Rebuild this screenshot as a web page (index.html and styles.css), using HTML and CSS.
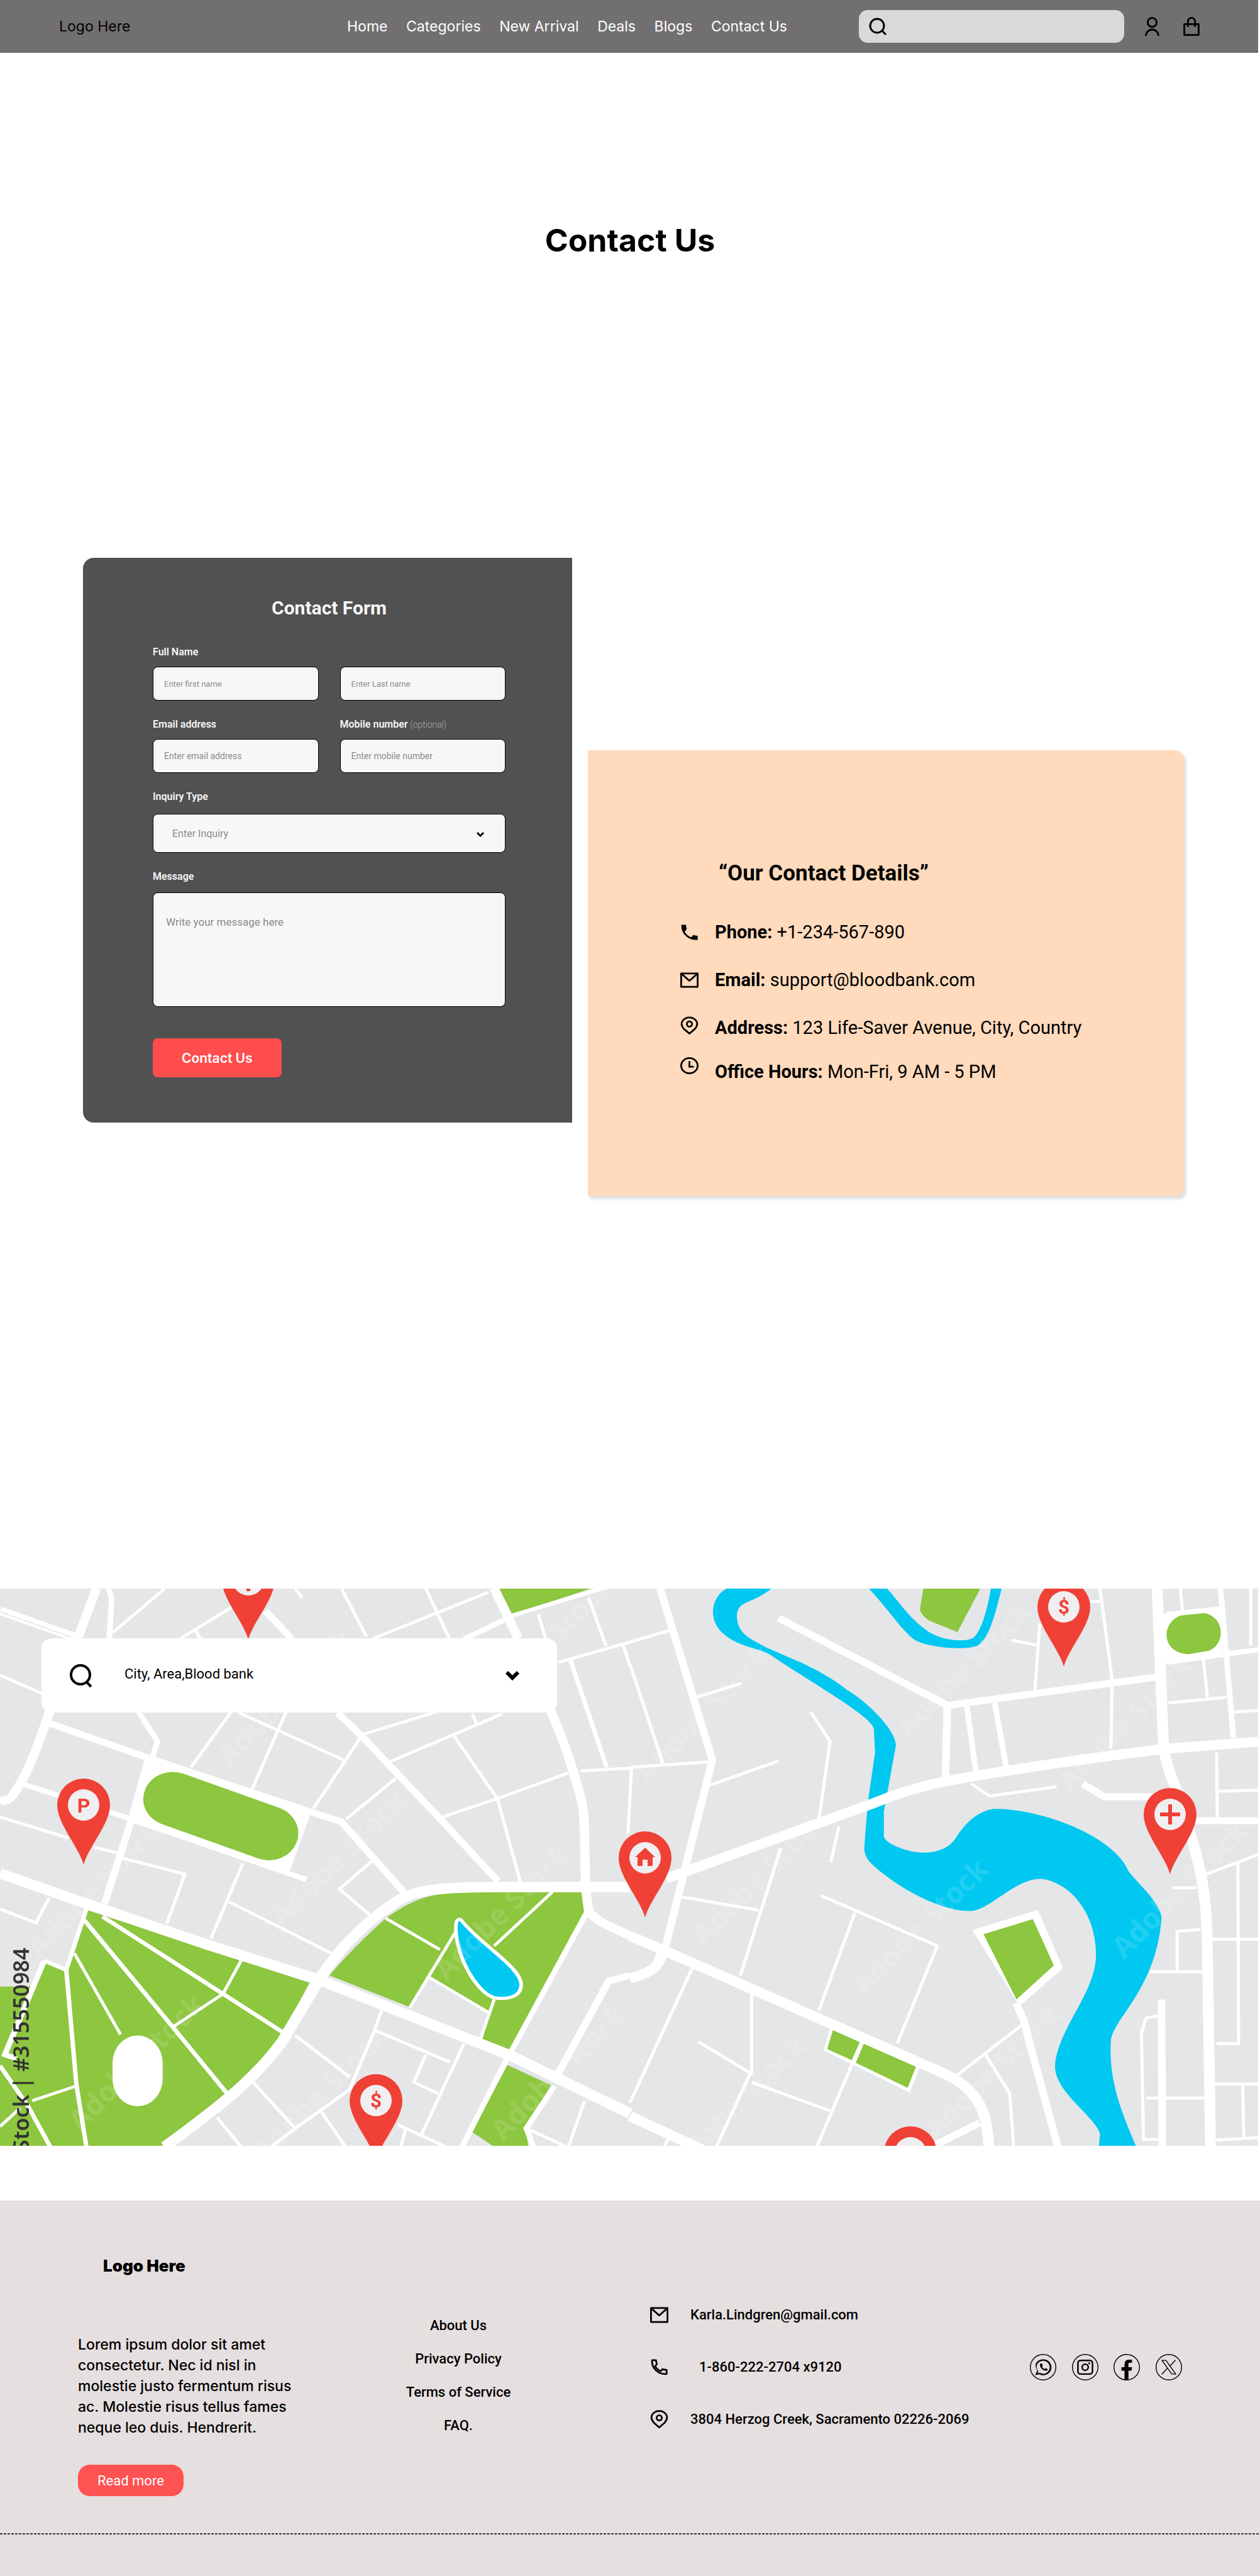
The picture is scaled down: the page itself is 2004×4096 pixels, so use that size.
FILE: index.html
```html
<!DOCTYPE html>
<html lang="en">
<head>
<meta charset="utf-8">
<meta name="viewport" content="width=device-width, initial-scale=1">
<title>Contact Us</title>
<link rel="stylesheet" href="styles.css">
</head>
<body>
<header class="site-header">
  <a class="logo" href="#">Logo Here</a>
  <nav class="nav" aria-label="Main">
    <a href="#">Home</a>
    <a href="#">Categories</a>
    <a href="#">New Arrival</a>
    <a href="#">Deals</a>
    <a href="#">Blogs</a>
    <a href="#">Contact Us</a>
  </nav>
  <label class="search">
    <svg width="28" height="28" viewBox="0 0 28 28" fill="none" stroke="#000" stroke-width="3"><circle cx="13" cy="13" r="11"/><path d="M20 20l7 7"/></svg>
    <input type="search" aria-label="Search">
  </label>
  <div class="header-actions">
    <a href="#" aria-label="Account"><svg width="23" height="30" viewBox="0 0 32 42" fill="none" stroke="#000" stroke-width="4"><circle cx="16" cy="12" r="10"/><path d="M2 42a14 14 0 0 1 28 0"/></svg></a>
    <a href="#" aria-label="Bag"><svg width="26" height="30" viewBox="0 0 36 42" fill="none" stroke="#000" stroke-width="4" stroke-linejoin="round"><path d="M2 16h32v24H2z"/><path d="M10 22V10a8 8 0 0 1 16 0v12"/></svg></a>
  </div>
</header>

<main>
  <h1 class="page-title">Contact Us</h1>

  <section class="contact">
    <form class="form-card">
      <h2>Contact Form</h2>
      <div class="fields">
        <div class="field">
          <label for="first">Full Name</label>
          <input id="first" type="text" placeholder="Enter first name">
        </div>
        <div class="field field-bottom">
          <input id="last" type="text" placeholder="Enter Last name" aria-label="Last name">
        </div>
        <div class="field reach-field">
          <label for="email">Email address</label>
          <input id="email" type="email" placeholder="Enter email address">
        </div>
        <div class="field reach-field">
          <label for="mobile">Mobile number <span>(optional)</span></label>
          <input id="mobile" type="tel" placeholder="Enter mobile number">
        </div>
        <div class="field wide inquiry">
          <label for="inquiry">Inquiry Type</label>
          <div class="select">
            <select id="inquiry"><option>Enter Inquiry</option></select>
            <svg width="12" height="9" viewBox="0 0 12 9" fill="none" stroke="#000" stroke-width="3"><path d="M1 2l5 5 5-5"/></svg>
          </div>
        </div>
        <div class="field wide message">
          <label for="message">Message</label>
          <textarea id="message" placeholder="Write your message here"></textarea>
        </div>
      </div>
      <button class="submit" type="submit">Contact Us</button>
    </form>

    <aside class="details-card">
      <h2>“Our Contact Details”</h2>
      <ul>
        <li><svg width="29" height="25" viewBox="0 0 42 35"><path d="M2.500 0h10.500c.5 4 1 7 2 10l-5 6.500c4 6 9 10 15 12.500l4.500-5.500c3.500 1 7 1.500 10.500 2V35C16 36 1 18 2.500 0z"/></svg><span><b>Phone:</b> +1-234-567-890</span></li>
        <li><svg width="29" height="25" viewBox="0 0 42 35" fill="none" stroke="#000" stroke-width="4" stroke-linejoin="round"><path d="M2 2h38v31H2z"/><path d="M3 3l18 16L39 3"/></svg><span><b>Email:</b> support@bloodbank.com</span></li>
        <li class="top-icon"><svg width="29" height="30" viewBox="0 0 42 42" fill="none" stroke="#000" stroke-width="4"><path d="M21 39L8.500 28.500C-5 13 10 2 21 2s26 11 12.500 26.500z"/><circle cx="21" cy="17" r="6"/></svg><span><b>Address:</b> 123 Life-Saver Avenue, City, Country</span></li>
        <li class="hours"><svg width="29" height="27" viewBox="0 0 42 39" fill="none" stroke="#000" stroke-width="4"><ellipse cx="21" cy="19.500" rx="19" ry="17.500"/><path d="M21 9v13h10"/></svg><span><b>Office Hours:</b> Mon-Fri, 9 AM - 5 PM</span></li>
      </ul>
    </aside>
  </section>

  <section class="map">
    <svg class="map-art" viewBox="0 0 2001 886" role="img" aria-label="City map">
      <defs>
        <g id="pin"><path d="M0 95C-8 66-42 30-42 0a42 42 0 0 1 84 0C42 30 8 66 0 95z" fill="#ef4136"/><circle r="25" fill="#f1eef1"/></g>
      </defs>
      <rect width="2001" height="886" fill="#e5e6e8"/>
      <g transform="scale(.639 .5858) translate(0 -35)">
        <g fill="#8dc63f">
          <path d="M1243 35h227l-195 70z"/>
          <path d="M218 908L770 1105 690 1270 565 1405 400 1550H0V1115h90l20-65 55 20z"/>
          <path d="M820 1085C880 1010 910 980 960 930 1040 870 1080 858 1200 858H1450l8 47-190 388-68-31 20-77-152-95-46 82z"/>
          <path d="M1263 1328l109 55-64 117 7 50h-85l-55-40z"/>
        </g>
        <g fill="#fff">
          <path d="M370 500L775 640 720 805 325 670z"/>
          <rect x="280" y="1248" width="125" height="192" rx="62" ry="75"/>
        </g>
        <path d="M430 606L669 699" stroke="#8dc63f" stroke-width="147" stroke-linecap="round"/>
        <g fill="none" stroke="#fff" stroke-width="8">
          <path d="M0 270L105 320M575 370L475 520M712 370L628 578M595 372L855 500M900 435L780 632M905 430L1100 365M970 505L1250 375M1130 435L1238 605 1295 830M1415 535L1238 605 1100 655M985 550L862 660M1445 530L1568 522M1340 105L1358 170M1390 235L1568 180M1465 60L1508 190M1060 35L1118 170M930 170L1215 45M850 35L912 165M280 155L410 35M450 170L600 70M488 150L500 175M735 35L752 60M1175 375L1188 405M1550 185L1568 245"/>
          <path d="M0 655L170 712M235 737L290 752M300 765L460 810 415 945M605 780L525 985M570 885L825 1025M925 775L845 850 925 925M0 905L90 942 122 875"/>
          <path d="M735 1248L870 1360M950 1180L930 1240 870 1395 735 1500 675 1550M935 1235L1120 1320M1155 1270L1050 1515M1060 1300L1030 1375 1090 1405M540 1470L600 1550M630 1375L735 1500M800 1455L860 1550M990 1490L1110 1550M1010 1500L998 1550M1310 1500L1410 1550M1455 1425L1415 1550"/>
          <path d="M185 1025L300 1245M600 1045L555 1135 430 1225M80 1425L190 1385M0 1495L50 1445M960 930L1095 1015M1135 965L1020 1172M1375 858L1230 1005M1068 1090L1215 1185M1230 1150L1195 1260"/>
          <path stroke-width="11" d="M165 1070L190 1380 215 1550M210 935L430 1225 565 1405M255 925L555 1135 705 1240M0 1330L70 1440 125 1550M1510 520L1420 230M1275 108L1568 12M110 1045L165 1070 215 905"/>
          <path stroke-width="14" d="M110 1045L12 1300 40 1310M270 35L278 60 272 170M345 370L392 450 380 490M55 565L325 660 763 825M1155 172L1275 110M1262 1310L1150 1550M1380 1385L1310 1500 1328 1550M1465 905L1268 1300"/>
          <path stroke-width="18" d="M122 400L370 495 770 640 850 668 1010 865M370 495L325 670 260 890M840 372L900 435 1100 665 1240 830M660 95L725 170M1568 1085L1515 1100 1380 1370"/>
          <path stroke-width="23" d="M240 35L195 165M0 95L200 172M125 365C100 440 80 510 50 565S20 605 0 612M1230 35L1290 170M1370 365C1400 440 1425 520 1440 580S1455 640 1457 845L1465 910C1490 945 1520 950 1568 978"/>
          <path stroke-width="28" d="M0 808L215 890 520 1003 790 1095 1270 1302 1568 1460M1568 845H1250C1060 845 1020 855 960 905 890 960 840 1020 795 1095L705 1260C640 1360 560 1430 410 1550"/>
        </g>
        <path d="M0 98L175 166" stroke="#e5e6e8" stroke-width="3"/>
        <path d="M1148 935C1200 1005 1300 1065 1297 1112 1295 1150 1250 1150 1228 1145 1180 1125 1130 1020 1135 945 1137 930 1145 932 1148 935z" fill="#00c8f0" stroke="#fff" stroke-width="9"/>

        <g transform="translate(1568 0)">
          <path fill="#00c8f0" d="M240 35C200 60 195 120 230 155 270 195 320 195 350 215 450 290 600 380 607 415L610 480 592 615 583 740C585 770 600 780 620 800 700 870 790 912 850 910 900 905 960 820 1025 823 1100 835 1160 920 1160 1030 1160 1130 1065 1230 1058 1330 1055 1400 1160 1470 1170 1515L1167 1550H1260C1230 1470 1190 1380 1197 1260 1205 1200 1310 1120 1323 930 1325 890 1250 820 1240 800 1200 700 1010 630 905 633 860 640 830 680 812 710 790 750 740 757 700 748 650 735 630 715 632 705V640L662 460C660 420 600 350 540 310 470 250 400 225 340 195 300 170 268 160 266 110 268 65 300 80 352 35z"/>
          <path fill="#00c8f0" d="M595 35C650 100 690 170 720 180 770 200 850 200 865 190 895 170 910 100 925 35H898C890 90 875 150 855 168 840 180 780 180 740 150 690 110 670 70 640 35z"/>
          <path fill="#8dc63f" d="M730 35H872L815 153 745 122Q722 105 722 90z"/>
          <path fill="#fff" d="M852 962L1015 907 1078 1065 970 1168zM482 1288L500 1220 725 1325 696 1403zM1318 105L1475 90V215L1330 238z"/>
          <path fill="#8dc63f" d="M880 973L1003 932 1055 1058 962 1150zM505 1233L572 1266 552 1315 491 1285zM582 1270L712 1333 691 1390 562 1322zM1390 103L1430 101C1485 115 1480 190 1440 204L1390 213C1315 210 1320 110 1390 103z"/>
          <g fill="none" stroke="#fff" stroke-width="8">
            <path d="M0 180L100 148M0 240L82 510M0 520L200 505M4 520L-5 700M165 330L278 292M195 570L370 503M450 370L498 450 470 665M520 680L500 778M375 740L275 1085M120 870L320 908M475 868L765 1005 665 1270M560 915L470 1180M155 1065L0 1430M303 1135V1355M170 1265L300 1350 215 1550M303 1375L497 1452M555 1320L465 1550M85 1550L95 1530M950 175L1020 190M1020 130L1008 310M1170 35L1200 280 1197 470M1145 70H1172M1370 35L1375 95M1545 35V190M1427 225L1437 330M1340 345L1485 330M1505 370L1568 365M850 565L895 598 1062 573M1460 480L1462 660M1465 585L1568 582M1435 810L1568 755M1513 780L1515 1270H1460M1350 847H1410M1420 960L1362 965V1075M1295 1075H1430M1450 987H1568M1313 1195L1285 1200 1273 1240 1278 1530H1315M1285 1418H1430M1455 1380H1568M1525 1385L1528 1530M1460 1532L1568 1525M975 1220L815 1355M885 1300L945 1405 955 1550"/>
            <path stroke-width="14" d="M1335 235L1568 200M1335 105L1470 90M1470 35L1502 440M838 350L862 540M908 345L938 530"/>
            <path stroke-width="19" d="M75 35L205 500 90 1000M370 115L790 352 1310 275M790 352L785 555M1127 565L1180 600H1300M1400 665H1568M1323 1150L1325 1550M960 1160Q985 1210 990 1250L1065 1550M760 1545L870 1485"/>
            <path stroke-width="27" d="M85 1000C75 1050 70 1075 0 1092M0 978L70 1010 780 1350C870 1395 890 1460 893 1550M0 1467L180 1558M90 822L600 620Q700 575 800 555 1000 515 1330 470L1568 450M1312 35L1328 460Q1335 520 1360 580L1400 720C1430 830 1435 900 1437 1000L1445 1550"/>
          </g>
        </g>
      </g>
      <g class="watermark">
        <text transform="translate(62 590) rotate(-45)">Adobe Stock</text>
        <text transform="translate(450 540) rotate(-45)">Adobe Stock</text>
        <text transform="translate(365 285) rotate(-45)">Adobe Stock</text>
        <text transform="translate(710 625) rotate(-45)">Adobe Stock</text>
        <text transform="translate(128 865) rotate(-45)">Adobe Stock</text>
        <text transform="translate(420 915) rotate(-45)">Adobe Stock</text>
        <text transform="translate(800 880) rotate(-45)">Adobe Stock</text>
        <text transform="translate(780 200) rotate(-45)">Adobe Stock</text>
        <text transform="translate(1030 310) rotate(-45)">Adobe Stock</text>
        <text transform="translate(1120 570) rotate(-45)">Adobe Stock</text>
        <text transform="translate(1375 650) rotate(-45)">Adobe Stock</text>
        <text transform="translate(1445 240) rotate(-45)">Adobe Stock</text>
        <text transform="translate(1702 325) rotate(-45)">Adobe Stock</text>
        <text transform="translate(1788 590) rotate(-45)">Adobe Stock</text>
        <text transform="translate(1085 930) rotate(-45)">Adobe Stock</text>
        <text transform="translate(1490 880) rotate(-45)">Adobe Stock</text>
      </g>
      <text class="stock-id" transform="translate(46 571) rotate(-90)">Stock | #315550984</text>
      <g class="pins">
        <use href="#pin" x="395" y="-14"/><path d="M392 0h6v4h-6z" fill="#ef4136"/>
        <use href="#pin" x="133" y="344"/><text x="133" y="356">P</text>
        <use href="#pin" x="598" y="814"/><text x="598" y="825">$</text>
        <use href="#pin" x="1026" y="428"/><path fill="#ef4136" d="M1026 412l16 15h-4v14h-8v-10h-8v10h-8v-14h-4z"/>
        <use href="#pin" x="1692" y="29"/><text x="1692" y="40">$</text>
        <use href="#pin" x="1861" y="359"/><path d="M1861 343v32M1845 359h32" stroke="#ef4136" stroke-width="6"/>
        <use href="#pin" x="1448" y="897"/>
      </g>
    </svg>
    <div class="map-search">
      <svg width="36" height="38" viewBox="0 0 36 38" fill="none" stroke="#000" stroke-width="4"><circle cx="17" cy="18" r="15"/><path d="M26 29l8 8"/></svg>
      <input type="text" placeholder="City, Area,Blood bank" aria-label="City, area or blood bank">
      <button type="button" aria-label="Show options"><svg width="22" height="17" viewBox="0 0 22 17" fill="none" stroke="#000" stroke-width="6"><path d="M2 3l9 9 9-9"/></svg></button>
    </div>
  </section>
</main>

<footer class="site-footer">
  <div class="footer-grid">
    <div class="about">
      <a class="footer-logo" href="#">Logo Here</a>
      <p>Lorem ipsum dolor sit amet<br>consectetur. Nec id nisl in<br>molestie justo fermentum risus<br>ac. Molestie risus tellus fames<br>neque leo duis. Hendrerit.</p>
      <button type="button">Read more</button>
    </div>
    <nav class="links" aria-label="Footer">
      <a href="#">About Us</a>
      <a href="#">Privacy Policy</a>
      <a href="#">Terms of Service</a>
      <a href="#">FAQ.</a>
    </nav>
    <ul class="reach">
      <li><svg width="29" height="26" viewBox="0 0 42 36" fill="none" stroke="#000" stroke-width="4" stroke-linejoin="round"><path d="M2 2h38v32H2z"/><path d="M3 3l18 16L39 3"/></svg><a href="#">Karla.Lindgren@gmail.com</a></li>
      <li class="phone"><svg width="29" height="26" viewBox="0 0 42 36" fill="none" stroke="#000" stroke-width="4" stroke-linejoin="round"><path d="M4.500 2h9c.5 4 1 6 2 9l-4 5c3 5 8 9 13 11l4-4.500c3 1 6 1.500 9.500 2v9C18 35 3 20 4.500 2z"/></svg><a href="#">1-860-222-2704 x9120</a></li>
      <li><svg width="29" height="30" viewBox="0 0 42 43" fill="none" stroke="#000" stroke-width="4"><path d="M21 40L8.500 29C-5 13 10 2 21 2s26 11 12.500 27z"/><circle cx="21" cy="18" r="6"/></svg><span>3804 Herzog Creek, Sacramento 02226-2069</span></li>
    </ul>
    <div class="social">
      <a href="#" aria-label="WhatsApp"><svg viewBox="0 0 60 60"><circle cx="30" cy="30" r="29"/><path class="ink" fill-rule="evenodd" d="M12 48l5-11C7 22 18 12 31 12c11 0 18 9 18 18 0 15-16 22-27 16zM17.500 44l5-1.500C34 49 45 41 45 30c0-8-7-14.500-14-14.500-14 0-20 13-12 23z"/><path class="ink" d="M23 23c3-3 5-2 6 2l-1 4c1 3 3 5 6 5l3-2c4 2 4 5 1 6-9 1-16-8-15-15z"/></svg></a>
      <a href="#" aria-label="Instagram"><svg viewBox="0 0 60 60"><circle cx="30" cy="30" r="29"/><rect x="13.500" y="14.500" width="33" height="31" rx="6" stroke-width="3.500"/><circle cx="30" cy="30" r="7" stroke-width="3.500"/><circle class="ink" cx="39" cy="21" r="2.200"/></svg></a>
      <a href="#" aria-label="Facebook"><svg viewBox="0 0 60 60"><circle cx="30" cy="30" r="29"/><path class="ink" d="M25 59.500V38h-7v-8h7v-5c0-9 4-12 10-12h7v7h-5c-3 0-3 2-3 4v6h8l-1 8h-7v21.500z"/></svg></a>
      <a href="#" aria-label="X"><svg viewBox="0 0 60 60"><circle cx="30" cy="30" r="29"/><path d="M14.500 14.500h9l22 31h-9zM45 14L32 28M14 46l13.500-14.500"/></svg></a>
    </div>
  </div>
</footer>
</body>
</html>
```
FILE: styles.css
```css
* { box-sizing: border-box; }

body {
  margin: 0;
  background: #fff;
  color: #000;
  font-family: Roboto, "Liberation Sans", sans-serif;
}

a { color: inherit; text-decoration: none; }
h1, h2, p, ul { margin: 0; padding: 0; }
ul { list-style: none; }
svg { display: block; flex: none; }
button, input, select, textarea { font: inherit; }
button { cursor: pointer; border: 0; }

/* Header */
.site-header {
  display: grid;
  grid-template-columns: 458fr 700fr 114fr 422fr 120fr;
  align-items: center;
  height: 84px;
  margin-right: 3px;
  padding: 0 93px 0 94px;
  background: #726f70;
  font-family: Inter, sans-serif;
  font-size: 23px;
}
.nav {
  display: flex;
  justify-content: space-between;
  color: #fff;
  white-space: nowrap;
}
.search {
  grid-column: 4;
  display: flex;
  align-items: center;
  gap: 12px;
  min-width: 0;
  height: 52px;
  padding: 0 16px;
  border-radius: 14px;
  background: #d9d9d9;
}
.search input {
  flex: 1;
  width: 0;
  min-width: 0;
  border: 0;
  background: none;
}
.header-actions {
  display: flex;
  justify-content: flex-end;
  gap: 38px;
}

/* Title */
.page-title {
  padding: 268px 0 475px;
  font-family: Inter, sans-serif;
  font-size: 50px;
  line-height: 60px;
  font-weight: 700;
  text-align: center;
}

/* Contact section */
.contact {
  display: grid;
  grid-template-columns: 778fr 948fr;
  column-gap: 25px;
  align-items: start;
  padding: 0 121px 0 132px;
}
.form-card {
  padding: 62px 106px 72px 111px;
  border-radius: 17px 0 0 17px;
  background: #515151;
  color: #f7f7f7;
}
.form-card h2 {
  margin-bottom: 43px;
  font-size: 30px;
  line-height: 36px;
  font-weight: 700;
  text-align: center;
}
.fields {
  display: grid;
  grid-template-columns: 1fr 1fr;
  gap: 29px 34px;
}
.field {
  display: flex;
  flex-direction: column;
  gap: 14px;
}
.field-bottom { justify-content: flex-end; }
.wide { grid-column: 1 / -1; }
.inquiry { gap: 18px; }
.message { gap: 16px; }
.field label {
  font-size: 16px;
  line-height: 18px;
  font-weight: 600;
}
.field label span {
  font-size: 14px;
  font-weight: 200;
  color: #ccc;
}
.field input, .field textarea, .field select {
  width: 100%;
  height: 54px;
  padding: 0 17px;
  border: 1px solid #000;
  border-radius: 8px;
  background: #f7f7f7;
  font-size: 13px;
}
.field ::placeholder { color: #8b8b8b; opacity: 1; }
.reach-field input { font-size: 14px; }
.select { position: relative; }
.field select {
  display: block;
  height: 62px;
  padding: 0 30px;
  appearance: none;
  font-size: 16px;
  color: #8b8b8b;
}
.select svg {
  position: absolute;
  right: 34px;
  top: 28px;
  pointer-events: none;
}
.field textarea {
  display: block;
  height: 182px;
  padding: 36px 20px;
  font-size: 17px;
  resize: none;
}
.submit {
  height: 62px;
  margin-top: 50px;
  padding: 0 46px;
  border-radius: 8px;
  background: #ff4d4d;
  color: #fff;
  font-family: Inter, sans-serif;
  font-size: 21px;
  font-weight: 600;
}

.details-card {
  margin-top: 306px;
  padding: 176px 147px 180px;
  border-radius: 0 14px 14px 0;
  background: #ffdabc;
  box-shadow: 4px 5px 4px rgba(0, 0, 0, .12);
}
.details-card h2 {
  margin: 0 0 55px 61px;
  font-size: 35px;
  line-height: 40px;
  font-weight: 700;
}
.details-card li {
  display: flex;
  align-items: center;
  gap: 26px;
  margin-bottom: 40px;
  font-size: 29px;
  line-height: 36px;
}
.details-card b { font-weight: 700; }
.details-card .top-icon {
  align-items: flex-start;
  margin-bottom: 29px;
}
.details-card .hours {
  align-items: flex-end;
  min-height: 41px;
  margin-bottom: 0;
}
.details-card .hours svg { align-self: flex-start; }

/* Map */
.map {
  position: relative;
  margin: 624px 3px 87px 0;
  overflow: hidden;
}
.map-art { width: 100%; height: auto; }
.watermark {
  fill: #fff;
  opacity: .13;
  font: 700 46px "Open Sans", sans-serif;
}
.stock-id {
  fill: #333;
  font: 600 34px "Noto Sans", sans-serif;
  text-anchor: end;
}
.pins text {
  fill: #ef4136;
  font: 700 32px Roboto, sans-serif;
  text-anchor: middle;
}
.map-search {
  position: absolute;
  left: 66px;
  top: 79px;
  display: flex;
  align-items: center;
  width: 41%;
  height: 118px;
  padding: 0 60px 0 45px;
  border-radius: 16px;
  background: #fff;
}
.map-search input {
  flex: 1;
  min-width: 0;
  margin-left: 51px;
  padding: 0 0 6px;
  border: 0;
  background: none;
  font-size: 22px;
}
.map-search ::placeholder { color: #000; opacity: 1; }
.map-search button { padding: 0; background: none; }

/* Footer */
.site-footer {
  padding-bottom: 66px;
  background: #e5dfdf;
  font-size: 22px;
  font-weight: 500;
}
.footer-grid {
  display: grid;
  grid-template-columns: 414fr 496fr 604fr 242fr;
  padding: 87px 124px 61px;
  background: repeating-linear-gradient(90deg, #333 0 4px, transparent 4px 6px) left bottom / 100% 2px no-repeat;
}
.about { font-family: Inter, sans-serif; }
.footer-logo {
  display: block;
  margin: 0 0 92px 40px;
  font-size: 26px;
  line-height: 34px;
  font-weight: 900;
}
.about p {
  font-size: 23px;
  line-height: 33px;
  white-space: nowrap;
}
.about button {
  height: 50px;
  margin-top: 42px;
  padding: 0 31px;
  border-radius: 19px;
  background: #ff5252;
  color: #fff;
  font-family: Roboto, sans-serif;
  font-size: 22px;
  font-weight: 400;
}
.links {
  display: flex;
  flex-direction: column;
  align-items: center;
  gap: 27px;
  padding: 99px 114px 0 0;
  line-height: 26px;
}
.reach {
  display: flex;
  flex-direction: column;
  gap: 53px;
  padding-top: 80px;
  line-height: 30px;
}
.reach li {
  display: flex;
  align-items: center;
  gap: 35px;
}
.reach .phone a { padding-left: 14px; }
.social {
  display: flex;
  justify-content: space-between;
  padding-top: 157px;
}
.social svg {
  width: 42px;
  height: 42px;
  fill: none;
  stroke: #000;
  stroke-width: 2px;
}
.social .ink { fill: #000; stroke: none; }
```
